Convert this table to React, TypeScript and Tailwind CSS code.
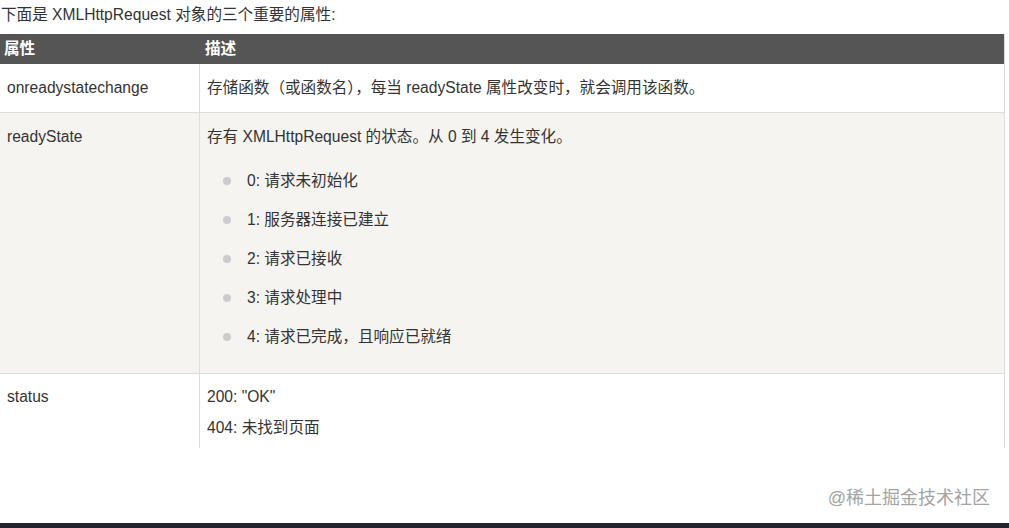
const font = { fontFamily: '"Liberation Sans", "Noto Sans CJK SC", sans-serif' };

const states = ['0: 请求未初始化', '1: 服务器连接已建立', '2: 请求已接收', '3: 请求处理中', '4: 请求已完成，且响应已就绪'];

export default function App() {
  return (
    <div className="w-[1009px] h-[528px] bg-white flex flex-col text-[#333] text-[15.6px] leading-[20px]" style={font}>
      <p className="h-[34px] pt-[5px] pl-[1px]">下面是 XMLHttpRequest 对象的三个重要的属性:</p>

      <div className="w-[1005px] h-[414px] overflow-hidden border-r border-[#ddd]">
        <div className="grid grid-cols-[200px_1fr] h-[30px] bg-[#555] text-white font-bold items-center">
          <div className="pl-[4px]">属性</div>
          <div className="pl-[5px]">描述</div>
        </div>

        <div className="grid grid-cols-[200px_1fr] bg-white border-b border-[#ddd]">
          <div className="py-[14px] pl-[7px] border-r border-[#ddd]">onreadystatechange</div>
          <div className="py-[14px] pl-[7px]">存储函数（或函数名），每当 readyState 属性改变时，就会调用该函数。</div>
        </div>

        <div className="grid grid-cols-[200px_1fr] bg-[#f6f4f0] border-b border-[#ddd]">
          <div className="pt-[14px] pl-[7px] border-r border-[#ddd]">readyState</div>
          <div className="pt-[14px] pb-[26px] pl-[7px]">
            <p>存有 XMLHttpRequest 的状态。从 0 到 4 发生变化。</p>
            <ul className="mt-[24px] flex flex-col gap-[19px]">
              {states.map((s) => (
                <li key={s} className="flex items-center">
                  <span className="ml-[16px] w-[8px] h-[8px] rounded-full bg-[#ccc]" />
                  <span className="ml-[16px]">{s}</span>
                </li>
              ))}
            </ul>
          </div>
        </div>

        <div className="grid grid-cols-[200px_1fr] bg-white h-[100px]">
          <div className="pt-[13px] pl-[7px] border-r border-[#ddd]">status</div>
          <div className="pt-[13px] pl-[7px] flex flex-col gap-[11px]">
            <p>200: "OK"</p>
            <p>404: 未找到页面</p>
          </div>
        </div>
      </div>

      <div className="flex-1 flex items-end justify-end pr-[19px] pb-[13px]">
        <span className="text-[18px] leading-[24px] text-[#a3a3a3]">@稀土掘金技术社区</span>
      </div>
      <div className="h-[5px] bg-[#23232e]" />
    </div>
  );
}
